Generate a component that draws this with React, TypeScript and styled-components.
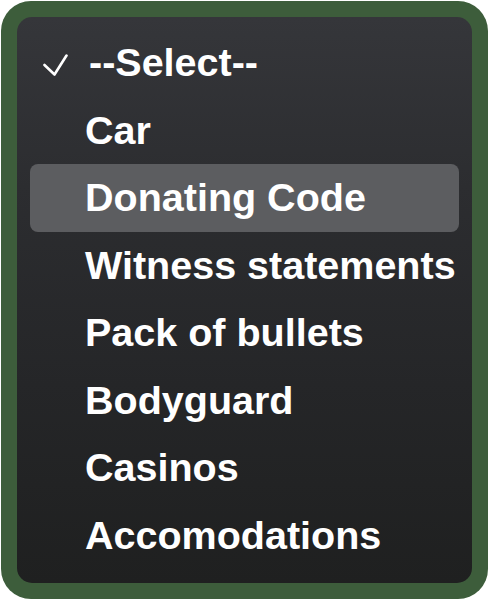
import React from "react";
import styled, { createGlobalStyle } from "styled-components";

const Global = createGlobalStyle`
  html, body { margin: 0; padding: 0; background: #ffffff; }
  body { font-family: "Liberation Sans", Arial, sans-serif; }
`;

const Frame = styled.div`
  box-sizing: border-box;
  margin: 1px 0 0 1px;
  width: 487px;
  height: 598px;
  padding: 16px;
  border-radius: 30px;
  background: #3d5d3b;
`;

const Panel = styled.div`
  box-sizing: border-box;
  height: 100%;
  border-radius: 15px;
  padding: 12px 13px 0 13px;
  background: linear-gradient(
    180deg,
    #35363a 0%,
    #2c2d30 30%,
    #252628 65%,
    #1f2020 100%
  );
  overflow: hidden;
`;

const List = styled.ul`
  list-style: none;
  margin: 0;
  padding: 0;
  display: flex;
  flex-direction: column;
`;

const Row = styled.li<{ $active?: boolean }>`
  position: relative;
  height: 67.5px;
  line-height: 67.5px;
  padding-left: 55px;
  border-radius: 8px;
  background: ${(p) => (p.$active ? "#5c5d60" : "transparent")};
  color: #ffffff;
  font-family: "Liberation Sans", Arial, sans-serif;
  font-weight: 700;
  font-size: 39.5px;
  white-space: nowrap;
  -webkit-font-smoothing: antialiased;
`;

const Label = styled.span<{ $shift?: boolean }>`
  margin-left: ${(p) => (p.$shift ? "4px" : "0")};
`;

const Check = styled.svg`
  position: absolute;
  left: 13px;
  top: 25px;
  width: 25px;
  height: 22px;
`;

const items = [
  "--Select--",
  "Car",
  "Donating Code",
  "Witness statements",
  "Pack of bullets",
  "Bodyguard",
  "Casinos",
  "Accomodations",
];

export default function App() {
  return (
    <>
      <Global />
      <Frame>
        <Panel>
          <List>
            {items.map((label, i) => (
              <Row key={label} $active={i === 2}>
                {i === 0 && (
                  <Check viewBox="0 0 25 22">
                    <path
                      d="M1.5 11 L11.5 20.5 L23.5 1.5"
                      fill="none"
                      stroke="#ffffff"
                      strokeWidth="2.6"
                      strokeLinecap="round"
                      strokeLinejoin="round"
                    />
                  </Check>
                )}
                <Label $shift={i === 0}>{label}</Label>
              </Row>
            ))}
          </List>
        </Panel>
      </Frame>
    </>
  );
}
